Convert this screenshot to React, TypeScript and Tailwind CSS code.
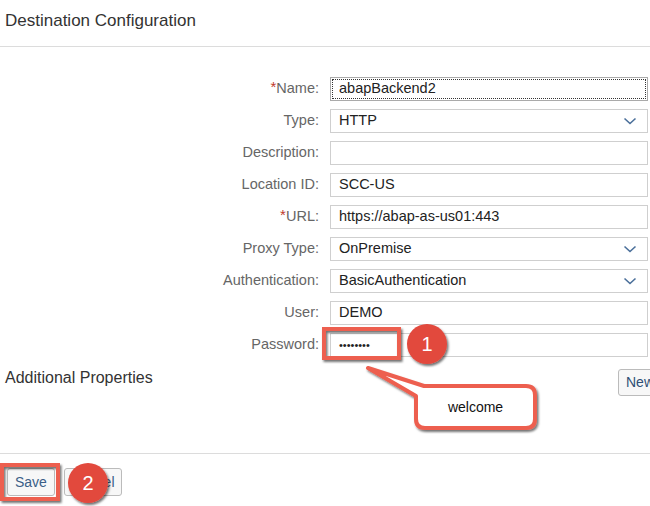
import React from 'react';

const FIELDS: { label: string; value: string; required?: boolean; select?: boolean; focus?: boolean; password?: boolean }[] = [
  { label: 'Name:', value: 'abapBackend2', required: true, focus: true },
  { label: 'Type:', value: 'HTTP', select: true },
  { label: 'Description:', value: '' },
  { label: 'Location ID:', value: 'SCC-US' },
  { label: 'URL:', value: 'https://abap-as-us01:443', required: true },
  { label: 'Proxy Type:', value: 'OnPremise', select: true },
  { label: 'Authentication:', value: 'BasicAuthentication', select: true },
  { label: 'User:', value: 'DEMO' },
  { label: 'Password:', value: '••••••••', password: true },
];

const Chevron = () => (
  <svg className="w-[14px] h-[10px]" viewBox="0 0 14 10" fill="none">
    <polyline points="1.5,2.5 7,7.5 12.5,2.5" stroke="#4a6f9a" strokeWidth="1.6" />
  </svg>
);

export default function App() {
  return (
    <div
      className="relative w-[650px] h-[506px] overflow-hidden bg-white text-[#333]"
      style={{ fontFamily: '"Liberation Sans", Arial, sans-serif' }}
    >
      {/* header */}
      <div className="h-[47px] border-b border-[#dcdcdc] flex items-center pl-[5px] pb-[4px]">
        <h1 className="text-[17px] text-[#333]">Destination Configuration</h1>
      </div>

      {/* form */}
      <div className="mt-[30px] grid grid-cols-[322px_318px] gap-x-[8px] gap-y-[8px]">
        {FIELDS.map(f => (
          <React.Fragment key={f.label}>
            <div className="h-[24px] flex items-center justify-end pr-[3px] text-[14.5px] text-[#666]">
              {f.required && <span className="text-[#c0392b] text-[15px] leading-none self-start mt-[2px]">*</span>}
              {f.label}
            </div>
            <div
              className={`h-[24px] border bg-white flex items-center pl-[8px] pr-[10px] text-[14.5px] text-[#222] ${
                f.focus ? 'border-[#aaa] outline outline-1 outline-dotted outline-[#333] -outline-offset-[3px]' : 'border-[#cfcfcf]'
              }`}
            >
              <span className={`flex-1 ${f.password ? 'text-[11px]' : ''}`}>{f.value}</span>
              {f.select && <Chevron />}
            </div>
          </React.Fragment>
        ))}
      </div>

      {/* additional properties */}
      <div className="mt-[12px] h-[28px] flex justify-between pl-[5px]">
        <span className="text-[16px] leading-[18px] text-[#333]">Additional Properties</span>
        <button className="h-[27px] w-[40px] mr-[-8px] border border-[#bbb] rounded-[3px] bg-[#f7f7f7] text-[14px] text-[#2f4f75] text-left pl-[7px]">
          New
        </button>
      </div>

      {/* footer */}
      <div className="mt-[56px] border-t border-[#dcdcdc] pt-[14px] pl-[7px] flex gap-[9px]">
        <button className="h-[28px] px-[7px] border border-[#bbb] rounded-[3px] bg-[#f7f7f7] text-[14px] text-[#3b5e87]">
          Save
        </button>
        <button className="h-[28px] px-[6px] border border-[#bbb] rounded-[3px] bg-[#f7f7f7] text-[14px] text-[#3b5e87]">
          Cancel
        </button>
      </div>

      {/* annotation layer */}
      <svg className="absolute inset-0 pointer-events-none" width="650" height="506" viewBox="0 0 650 506">
        <defs>
          <filter id="sh" x="-20%" y="-20%" width="140%" height="150%">
            <feDropShadow dx="1.5" dy="2" stdDeviation="1.2" floodColor="#000" floodOpacity="0.55" />
          </filter>
        </defs>
        <rect x="324" y="329" width="75" height="29" fill="none" stroke="#ed5f50" strokeWidth="4" filter="url(#sh)" />
        <rect x="2" y="465" width="56" height="34" fill="none" stroke="#ed5f50" strokeWidth="4" filter="url(#sh)" />
        <circle cx="427" cy="344" r="20" fill="#e2483d" filter="url(#sh)" />
        <circle cx="88" cy="483" r="20" fill="#e2483d" filter="url(#sh)" />
        <path
          d="M368 368 L424 386 L526 386 Q535 386 535 395 L535 419 Q535 428 526 428 L425 428 Q416 428 416 419 L416 396 Z"
          fill="#fff"
          stroke="#ed5f50"
          strokeWidth="4"
          strokeLinejoin="round"
          filter="url(#sh)"
        />
      </svg>
      <div className="absolute left-[407px] top-[333px] w-[40px] h-[22px] flex items-center justify-center text-[20px] text-white">
        1
      </div>
      <div className="absolute left-[68px] top-[472px] w-[40px] h-[22px] flex items-center justify-center text-[20px] text-white">
        2
      </div>
      <div className="absolute left-[418px] top-[397px] w-[115px] h-[20px] flex items-center justify-center text-[14px] text-[#111]">
        welcome
      </div>
    </div>
  );
}
